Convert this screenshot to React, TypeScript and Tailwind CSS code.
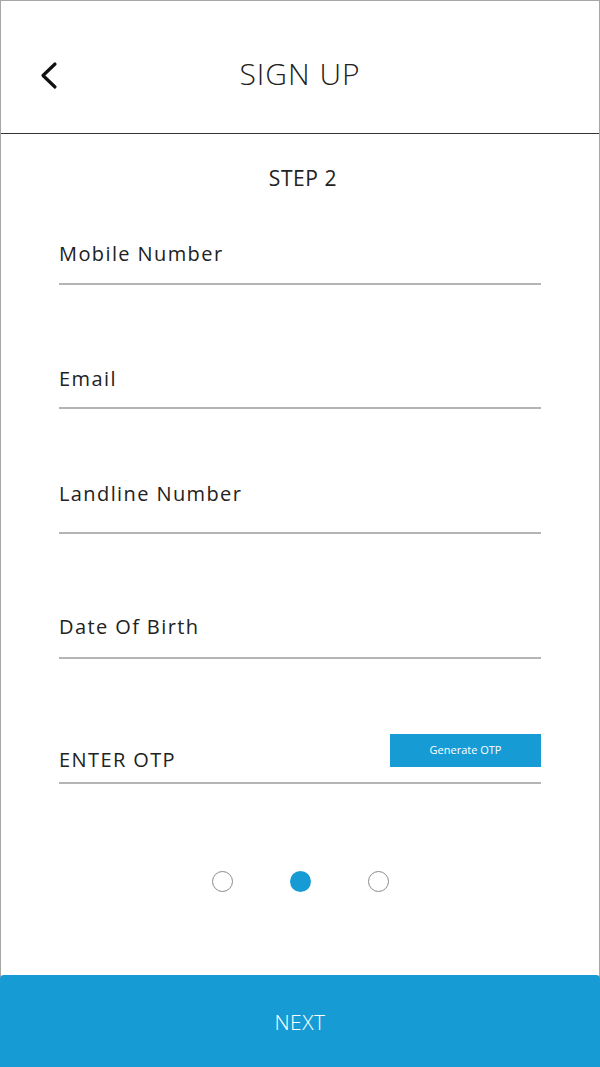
import { useState } from 'react';

const font = { fontFamily: '"Open Sans", "DejaVu Sans", sans-serif' };

function Field({ label, pb, height, children }: { label: string; pb: string; height: string; children?: React.ReactNode }) {
    return (
        <div className={`flex flex-col justify-end ${height}`}>
            <div className={`flex items-end justify-between ${pb}`}>
                <span className="text-[20px] leading-none tracking-[1.4px] text-[#222]">{label}</span>
                {children}
            </div>
            <div className="h-[2px] bg-[#b4b4b4]" />
        </div>
    );
}

export default function App() {
    const [step] = useState(1);

    return (
        <div style={font} className="flex h-[1067px] w-[600px] flex-col border-x border-t border-[#a6a6a6] bg-white">
            {/* Header */}
            <div className="grid h-[133px] shrink-0 grid-cols-[1fr_auto_1fr] items-center border-b border-[#333] pt-[13px]">
                <button className="mt-[3px] ml-[38px] flex h-[30px] w-[24px] items-center">
                    <svg width="20" height="30" viewBox="0 0 20 30">
                        <path d="M16 4 L4 15.5 L16 27" fill="none" stroke="#111" strokeWidth="3.2" strokeLinecap="round" strokeLinejoin="round" />
                    </svg>
                </button>
                <h1 className="text-[30px] font-light tracking-[1px] text-[#222]">SIGN UP</h1>
                <div />
            </div>

            {/* Form */}
            <div className="flex flex-1 flex-col px-[58px]">
                <p className="mt-[34px] pl-[6px] text-center text-[21px] leading-none font-medium tracking-[0.6px] text-[#222]">STEP 2</p>

                <Field label="Mobile Number" height="h-[96px]" pb="pb-[19px]" />
                <Field label="Email" height="h-[124px]" pb="pb-[18px]" />
                <Field label="Landline Number" height="h-[125px]" pb="pb-[28px]" />
                <Field label="Date Of Birth" height="h-[125px]" pb="pb-[20px]" />
                <Field label="ENTER OTP" height="h-[125px]" pb="pb-[12px]">
                    <button className="mb-[3px] flex h-[33px] w-[151px] items-center justify-center bg-[#179bd5] text-[11px] text-white">
                        Generate OTP
                    </button>
                </Field>

                {/* Step dots */}
                <div className="mt-[87px] flex justify-center gap-[57px]">
                    {[0, 1, 2].map((i) => (
                        <span
                            key={i}
                            className={`h-[21px] w-[21px] rounded-full ${i === step ? 'bg-[#179bd5]' : 'border border-[#8a8a8a] bg-white'}`}
                        />
                    ))}
                </div>
            </div>

            {/* Next button */}
            <button className="-mx-px flex h-[92px] shrink-0 items-center justify-center rounded-t-[4px] bg-[#179bd5] pt-[3px] text-[21px] font-light tracking-[0.5px] text-white">
                NEXT
            </button>
        </div>
    );
}
